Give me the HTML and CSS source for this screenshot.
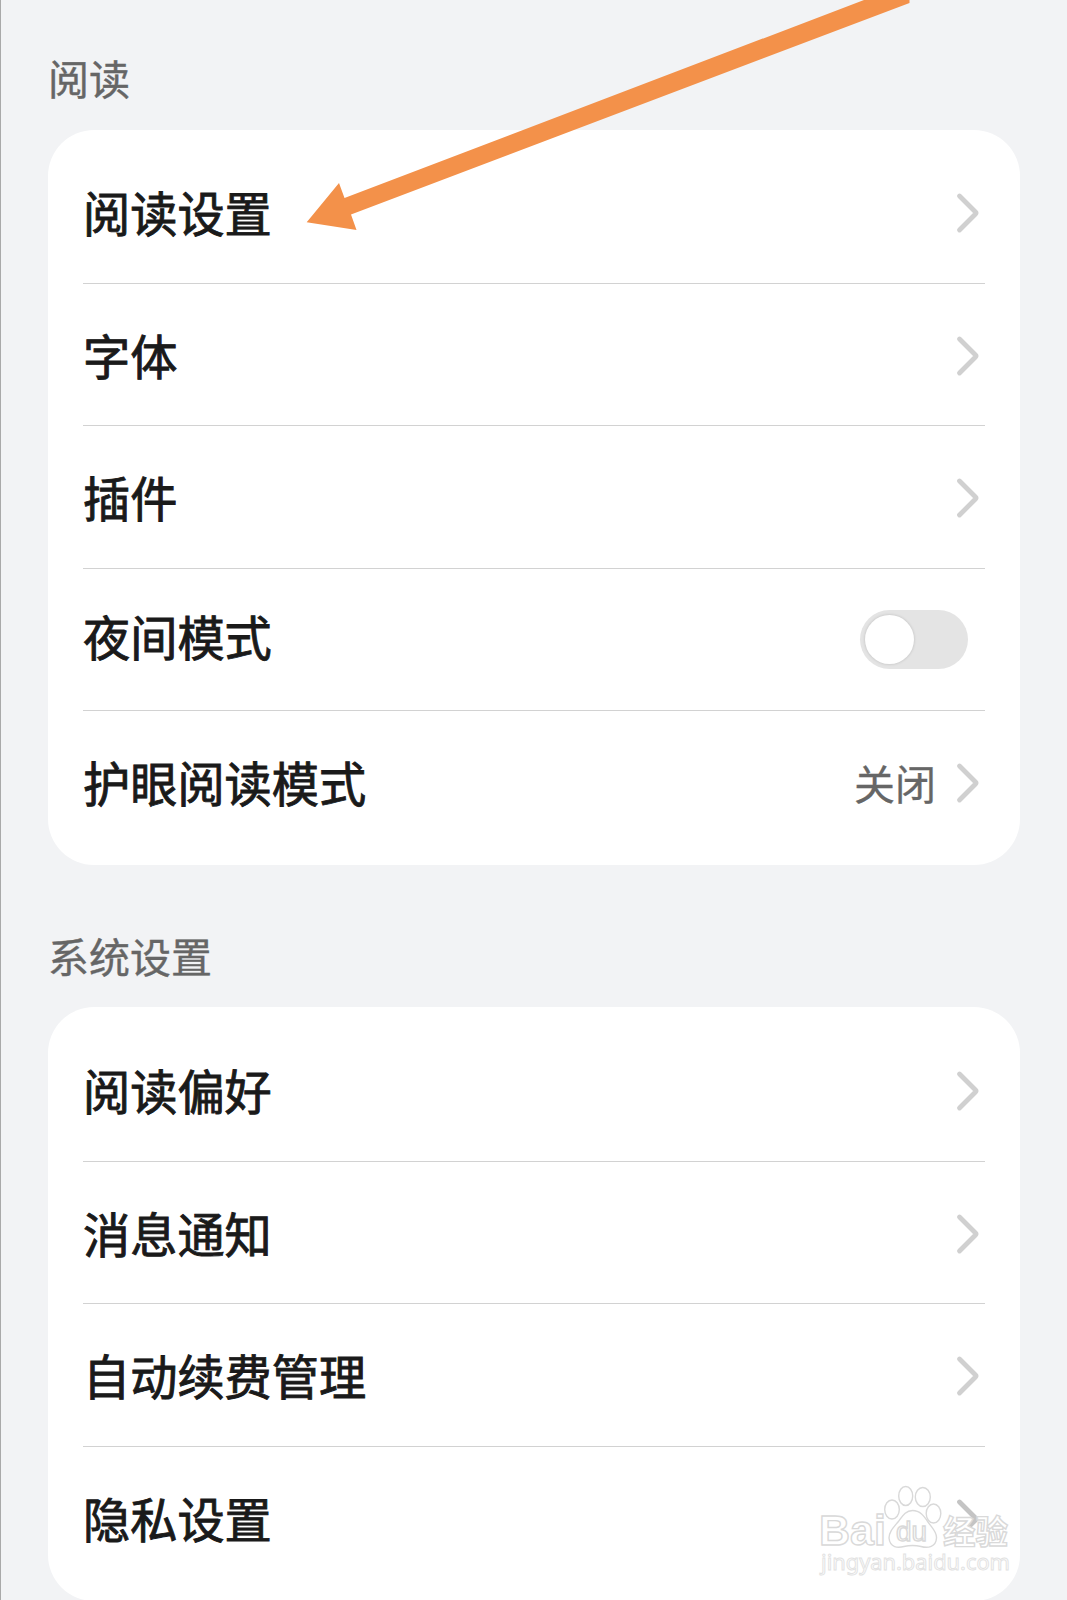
FILE: index.html
```html
<!DOCTYPE html>
<html lang="zh-CN">
<head>
<meta charset="utf-8">
<title>阅读设置</title>
<link rel="stylesheet" href="styles.css">
</head>
<body>
<svg class="defs" width="0" height="0"><symbol id="chevron" viewBox="0 0 24 42"><path d="M3.500 4 L19.500 20 Q20.500 21 19.500 22 L3.500 38"/></symbol></svg>
<main class="page">
  <h2 class="heading">阅读</h2>
  <ul class="card">
    <li class="row"><span class="label">阅读设置</span><svg class="chevron"><use href="#chevron"/></svg></li>
    <li class="row"><span class="label">字体</span><svg class="chevron"><use href="#chevron"/></svg></li>
    <li class="row"><span class="label">插件</span><svg class="chevron"><use href="#chevron"/></svg></li>
    <li class="row row-switch"><span class="label">夜间模式</span><span class="switch"><span class="knob"></span></span></li>
    <li class="row"><span class="label">护眼阅读模式</span><span class="value">关闭</span><svg class="chevron"><use href="#chevron"/></svg></li>
  </ul>
  <h2 class="heading">系统设置</h2>
  <ul class="card">
    <li class="row"><span class="label">阅读偏好</span><svg class="chevron"><use href="#chevron"/></svg></li>
    <li class="row"><span class="label">消息通知</span><svg class="chevron"><use href="#chevron"/></svg></li>
    <li class="row"><span class="label">自动续费管理</span><svg class="chevron"><use href="#chevron"/></svg></li>
    <li class="row"><span class="label">隐私设置</span><svg class="chevron chevron-dark" viewBox="0 0 24 42"><path d="M3.500 4 L19.500 20 Q20.500 21 19.500 22 L15 26.500"/></svg></li>
  </ul>
  <svg class="arrow" viewBox="0 0 1067 240"><path d="M306.700 222.300 L339 183 L344.500 198 L864 0 V-10 H909.500 V3 L351 214.500 L356.500 230 Z"/></svg>
  <svg class="watermark" viewBox="0 0 212 110">
    <g class="mark">
      <text x="16" y="74" class="latin" font-size="43" textLength="67" lengthAdjust="spacingAndGlyphs">Bai</text>
      <ellipse cx="89" cy="38.500" rx="7.300" ry="9.500"/>
      <ellipse cx="102.700" cy="25" rx="7" ry="9.500"/>
      <ellipse cx="119.800" cy="26" rx="7.500" ry="9.500"/>
      <ellipse cx="130.500" cy="42.500" rx="7.300" ry="9.500"/>
      <path d="M109.500 39.500 C102 39.500 99 46 95 51 C90 57 86 61 86 67 C87 77 95 77 101 75.500 C107 74 112 74 118 75.500 C125 77.500 133 76 133.500 67 C134 61 129 57 125 51 C121 45 117 39.500 109.500 39.500 Z"/>
      <text x="93" y="70" class="du" font-size="27" textLength="31" lengthAdjust="spacingAndGlyphs">du</text>
      <text x="140" y="72.500" class="han" font-size="33" textLength="65" lengthAdjust="spacingAndGlyphs">经验</text>
      <text x="18" y="99" class="site" font-size="22.500" textLength="189" lengthAdjust="spacingAndGlyphs">jingyan.baidu.com</text>
    </g>
  </svg>
</main>
</body>
</html>
```
FILE: styles.css
```css
* { box-sizing: border-box; }
html, body { margin: 0; padding: 0; height: 1600px; overflow: hidden; }
body { background: #f2f3f5; font-family: "Noto Sans CJK SC", sans-serif; color: #1a1a1a; }
.defs { position: absolute; }
.page { position: relative; height: 1600px; overflow: hidden; padding: 0 47px 0 47px; border-left: 1px solid #a9a9a9; }
.heading { margin: 0; height: 129.500px; padding-top: 47px; font-size: 41px; line-height: 60px; font-weight: 400; color: #666; -webkit-text-stroke: .4px #666; }
.card + .heading { height: 142px; padding-top: 60px; }
.card { list-style: none; margin: 0; padding: 12px 35px; background: #fff; border-radius: 46px; }
.row { display: flex; align-items: center; height: 142.400px; border-bottom: 1px solid #d2d2d2; }
.row:last-child { border-bottom: 0; }
.label { flex: 1; font-size: 47.200px; line-height: 66px; font-weight: 400; -webkit-text-stroke: .9px #1a1a1a; }
.row-switch .label { margin-top: -6px; }
.value { margin-right: 20px; font-size: 41px; line-height: 60px; color: #666; -webkit-text-stroke: .3px #666; }
.chevron { width: 24px; height: 42px; margin: 2px 5px 0 0; fill: none; stroke: #d0d0d0; stroke-width: 4.800; stroke-linecap: round; stroke-linejoin: round; }
.chevron-dark { stroke: #c4c4c4; }
.switch { width: 108px; height: 59px; margin: 1px 17px 0 0; padding: 5px; border-radius: 30px; background: #e4e4e4; }
.knob { display: block; width: 49px; height: 49px; border-radius: 50%; background: #fff; box-shadow: 0 0 3px rgba(0, 0, 0, .18); }
.arrow { position: absolute; left: -1px; top: 0; width: 1067px; height: 240px; fill: #f3914a; }
.watermark { position: absolute; left: 802px; top: 1471px; width: 212px; height: 110px; }
.mark { fill: #fff; fill-opacity: .75; stroke: #d9d9d9; stroke-width: 1.400; }
.latin { font-family: "Liberation Sans", sans-serif; font-weight: 700; }
.du { font-family: "Liberation Sans", sans-serif; }
.han { font-weight: 700; }
.site { font-family: "Noto Sans", sans-serif; stroke: #e2e2e2; stroke-width: 1; }
```
